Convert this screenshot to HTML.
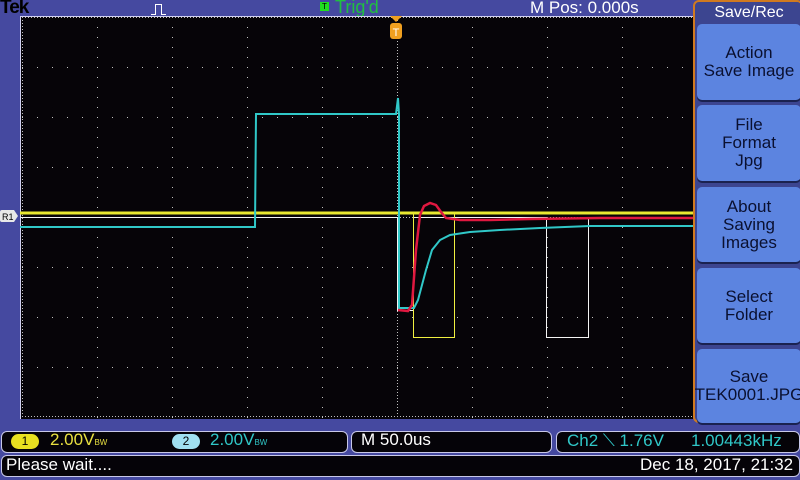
<!DOCTYPE html>
<html><head><style>
body{margin:0;width:800px;height:480px;background:#4549a0;overflow:hidden;position:relative;font-family:"Liberation Sans",sans-serif}
.t{position:absolute;white-space:nowrap}
.menu{position:absolute;left:693px;top:0;width:110px;height:423px;border:2px solid #d07a20;border-radius:6px;background:#3c4590;box-sizing:border-box}
.btn{position:absolute;left:697px;width:104px;background:#5c84e0;border-radius:5px;box-shadow:0 2px 0 #1a2250;color:#0a1030;font-size:17px;text-align:center;display:flex;align-items:center;justify-content:center;line-height:18px}
.box{position:absolute;background:#050308;border:1px solid #c8c8e8;border-radius:6px;box-sizing:border-box}
</style></head><body>
<div class="t" style="left:0;top:-3px;font-weight:bold;font-size:19px;color:#000;letter-spacing:-1px">Tek</div>
<svg class="t" style="left:150px;top:3px" width="20" height="12"><path d="M1 11.5H5.5V1.5H11.5V11.5H16" stroke="#fff" fill="none" stroke-width="1"/></svg>
<div class="t" style="left:320px;top:2px;width:9px;height:9px;background:#20e020;color:#000;font-size:8px;line-height:9px;text-align:center">T</div>
<div class="t" style="left:335px;top:-3px;font-size:18px;color:#20c040">Trig'd</div>
<div class="t" style="left:530px;top:-2px;font-size:17px;color:#fff">M Pos: 0.000s</div>
<svg class="t" style="left:0;top:0" width="694" height="424" shape-rendering="crispEdges">
<rect x="20" y="16" width="673" height="403" fill="#060408"/>
<line x1="20" y1="16.5" x2="693" y2="16.5" stroke="#d0d0f0"/>
<line x1="20.5" y1="16" x2="20.5" y2="419" stroke="#d0d0f0"/>
<g stroke="#c0c0c0" stroke-width="1" stroke-dasharray="1 9">
<line x1="22.5" y1="17" x2="22.5" y2="419" stroke-dasharray="1 2"/>
<line x1="97.5" y1="17" x2="97.5" y2="419"/><line x1="172.5" y1="17" x2="172.5" y2="419"/><line x1="247.5" y1="17" x2="247.5" y2="419"/><line x1="322.5" y1="17" x2="322.5" y2="419"/><line x1="397.5" y1="17" x2="397.5" y2="419" stroke-dasharray="1 2"/><line x1="472.5" y1="17" x2="472.5" y2="419"/><line x1="547.5" y1="17" x2="547.5" y2="419"/><line x1="622.5" y1="17" x2="622.5" y2="419"/>
</g>
<g stroke="#c0c0c0" stroke-width="1" stroke-dasharray="1 14">
<line x1="22" y1="17.5" x2="693" y2="17.5" stroke-dasharray="1 2"/>
<line x1="22" y1="67.5" x2="693" y2="67.5"/><line x1="22" y1="117.5" x2="693" y2="117.5"/><line x1="22" y1="167.5" x2="693" y2="167.5"/><line x1="22" y1="217.5" x2="693" y2="217.5" stroke-dasharray="1 2"/><line x1="22" y1="267.5" x2="693" y2="267.5"/><line x1="22" y1="317.5" x2="693" y2="317.5"/><line x1="22" y1="367.5" x2="693" y2="367.5"/><line x1="22" y1="416.5" x2="693" y2="416.5" stroke-dasharray="1 2"/>
</g>
<polyline points="20.5,217.5 397.5,217.5 397.5,310.5 413.5,310.5 413.5,217.5 546.5,217.5 546.5,337.5 588.5,337.5 588.5,217.5 693,217.5" stroke="#f4f4f4" fill="none"/>
<polyline points="413.5,213 413.5,337.5 454.5,337.5 454.5,213" stroke="#f0f040" fill="none"/>
<line x1="20" y1="213" x2="693" y2="213" stroke="#e8e830" stroke-width="3"/>
<g shape-rendering="auto">
<polyline points="20,227 255,227 256,114 396,114 398,98 399,114 399,308 414,308 418,300 422,285 426,270 432,250 440,240 450,235 470,232 500,230 540,228 590,226 693,226" stroke="#30c8c8" fill="none" stroke-width="2"/>
<polyline points="398,310 408,311 412,305 416,250 420,215 424,206 430,203 436,205 441,212 446,218 460,220 490,220 530,219 600,218 693,218" stroke="#e01840" fill="none" stroke-width="2.5"/>
<path d="M390 16H402L396 22Z" fill="#f0a020"/>
<rect x="390" y="23" width="12" height="16" rx="3" fill="#f0a020"/>
<text x="396" y="36" font-size="11" fill="#fff" text-anchor="middle" font-family="Liberation Sans">T</text>
</g>
</svg>
<svg class="t" style="left:0;top:210px" width="20" height="12"><path d="M0 2Q0 0 2 0H14L18 6L14 12H2Q0 12 0 10Z" fill="#e8e8e8"/><text x="2" y="10" font-size="9" font-family="Liberation Sans">R1</text></svg>
<div class="menu"></div>
<div class="t" style="left:698px;top:4px;width:102px;text-align:center;color:#fff;font-size:16px">Save/Rec</div>
<div class="btn" style="top:24px;height:76px">Action<br>Save Image</div>
<div class="btn" style="top:105px;height:76px">File<br>Format<br>Jpg</div>
<div class="btn" style="top:187px;height:75px">About<br>Saving<br>Images</div>
<div class="btn" style="top:268px;height:75px">Select<br>Folder</div>
<div class="btn" style="top:349px;height:74px">Save<br>TEK0001.JPG</div>
<div class="box" style="left:1px;top:431px;width:347px;height:22px"></div>
<div class="t" style="left:11px;top:434px;width:28px;height:15px;border-radius:8px;background:#e8e020;font-size:12px;text-align:center;line-height:15px">1</div>
<div class="t" style="left:50px;top:430px;font-size:17px;color:#e8e040">2.00V<span style="font-size:8px">BW</span></div>
<div class="t" style="left:172px;top:434px;width:28px;height:15px;border-radius:8px;background:#a0e0f0;font-size:12px;text-align:center;line-height:15px">2</div>
<div class="t" style="left:210px;top:430px;font-size:17px;color:#30c8c8">2.00V<span style="font-size:8px">BW</span></div>
<div class="box" style="left:351px;top:431px;width:201px;height:22px"></div>
<div class="t" style="left:361px;top:430px;font-size:17px;color:#fff">M 50.0us</div>
<div class="box" style="left:556px;top:431px;width:244px;height:22px"></div>
<div class="t" style="left:567px;top:431px;font-size:17px;color:#30c8c8">Ch2 ⟍ 1.76V</div>
<div class="t" style="left:691px;top:431px;font-size:17px;color:#30c8c8">1.00443kHz</div>
<div class="box" style="left:1px;top:455px;width:799px;height:22px"></div>
<div class="t" style="left:6px;top:455px;font-size:17px;color:#fff">Please wait....</div>
<div class="t" style="left:640px;top:455px;font-size:17px;color:#fff">Dec 18, 2017, 21:32</div>
</body></html>
